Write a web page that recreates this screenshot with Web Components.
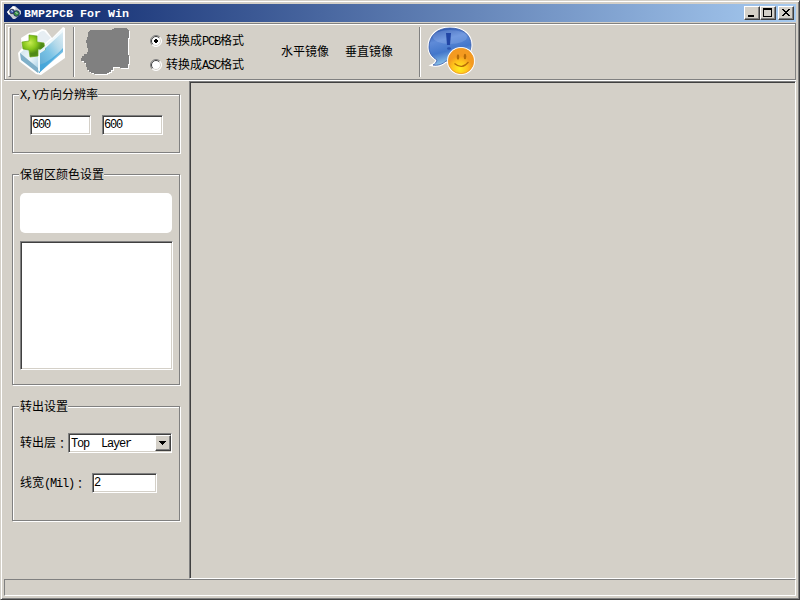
<!DOCTYPE html>
<html lang="zh-CN"><head><meta charset="utf-8"><title>BMP2PCB For Win</title>
<style>
html,body{margin:0;width:800px;height:600px;overflow:hidden}
body{font:12px/16px "Liberation Mono","Noto Sans CJK SC",monospace;color:#000;background:#d4d0c8}
</style></head><body>
<app-window></app-window>
<script>
function define(name, html) {
  customElements.define(name, class extends HTMLElement {
    constructor() {
      super();
      const t = document.createElement('template');
      t.innerHTML = html;
      this.attachShadow({mode: 'open'}).append(t.content.cloneNode(true));
    }
  });
}
// Half-width Latin run: each character takes 6px
define('half-text', `<style>:host{display:inline;letter-spacing:-1.2px;white-space:pre}</style><slot></slot>`);
define('text-field', `<style>
:host{display:block;box-sizing:border-box;width:61px;height:20px;background:#fff;border:1px solid;border-color:#808080 #fff #fff #808080;box-shadow:inset 1px 1px #404040,inset -1px -1px #d4d0c8;padding:1px 0 0 1px;line-height:16px}
</style><half-text><slot></slot></half-text>`);
define('group-box', `<style>
:host{display:block;box-sizing:border-box;width:168px;border:1px solid #808080;box-shadow:1px 1px #fff,inset 1px 1px #fff}
.cap{display:block;width:max-content;height:15px;margin:-7px 0 0 6px;padding-left:1px;background:#d4d0c8;white-space:nowrap}
</style><span class="cap"><slot name="caption"></slot></span><slot></slot>`);
define('radio-item', `<style>
:host{display:flex;align-items:center;height:16px;gap:4px;white-space:nowrap}
svg{display:block}span{padding-top:2px}.dot{display:none}:host([checked]) .dot{display:inline}
</style><svg width="12" height="12"><circle cx="6" cy="6" r="5.2" fill="#fff"/><path d="M2.1 9.9A5.5 5.5 0 0 1 9.9 2.1" fill="none" stroke="#808080"/><path d="M2.8 9.2A4.5 4.5 0 0 1 9.2 2.8" fill="none" stroke="#404040"/><path d="M2.8 9.2A4.5 4.5 0 0 0 9.2 2.8" fill="none" stroke="#d4d0c8"/><path d="M2.1 9.9A5.5 5.5 0 0 0 9.9 2.1" fill="none" stroke="#fff"/><path class="dot" d="M5 4h2v1h1v2h-1v1h-2v-1h-1v-2h1z" shape-rendering="crispEdges"/></svg><span><slot></slot></span>`);
define('win-button', `<style>
:host{display:block;box-sizing:border-box;width:16px;height:14px;background:#d4d0c8;border:1px solid;border-color:#fff #404040 #404040 #fff;box-shadow:inset -1px -1px #808080}
</style><slot></slot>`);
define('combo-box', `<style>
:host{display:flex;box-sizing:border-box;width:104px;height:20px;background:#fff;border:1px solid;border-color:#808080 #fff #fff #808080;box-shadow:inset 1px 1px #404040,inset -1px -1px #d4d0c8;padding:1px 0 1px 2px}
span{flex:1;line-height:18px}win-button{width:16px;height:16px}svg{display:block}
</style><span><half-text><slot></slot></half-text></span><win-button><svg width="14" height="14" shape-rendering="crispEdges"><path d="M3 5h7v1h-1v1h-1v1h-1v1h-1v-1h-1v-1h-1v-1h-1z"/></svg></win-button>`);
define('title-bar', `<style>
:host{display:flex;box-sizing:border-box;height:18px;align-items:center;padding:0 2px;color:#fff;background:linear-gradient(90deg,#0a246a,#a6caf0)}
b{flex:1;font-size:11.67px;line-height:18px;margin-left:2px;padding-top:1px;white-space:pre}
win-button:last-child{margin-left:2px}svg{display:block}
</style><svg width="16" height="16"><path d="M1 7L7 1h2l6 5v3l-6 5H7z" fill="#c8ccd4"/><path d="M1 7l6-6 3 2-7 7z" fill="#fff"/><circle cx="6" cy="6.5" r="2.3" fill="#3a55b4" stroke="#333a50"/><circle cx="10.5" cy="8.5" r="2.8" fill="#3c9440" stroke="#182b60"/><path d="M5 5.5l2 1M9.5 7.5l2 1" stroke="#c6dae0"/></svg><b>BMP2PCB For Win</b>
<win-button><svg width="14" height="12" shape-rendering="crispEdges"><path d="M3 8h6v2H3z"/></svg></win-button>
<win-button><svg width="14" height="12" shape-rendering="crispEdges"><path d="M2 1h9v9H2zM3 3v6h7V3z" fill-rule="evenodd"/></svg></win-button>
<win-button><svg width="14" height="12" shape-rendering="crispEdges"><path d="M3 2h2v1h1v1h2V3h1V2h2v1h-1v1H9v1H8v1h1v1h1v1h1v1H9V8H8V7H6v1H5v1H3V8h1V7h1V6h1V5H5V4H4V3H3z"/></svg></win-button>`);
define('open-icon', `<style>:host{display:block;width:48px;height:50px}svg{display:block}</style>
<svg width="48" height="50" viewBox="0 0 48 50"><defs><linearGradient id="a" x1="1" y1="0" x2=".2" y2="1"><stop stop-color="#e2eff5"/><stop offset=".35" stop-color="#b4d9ea"/><stop offset=".6" stop-color="#7cc4e6"/><stop offset="1" stop-color="#5da9d3"/></linearGradient><linearGradient id="b" x2="1" y2="1"><stop stop-color="#b5d2e0"/><stop offset=".5" stop-color="#eff8fc"/><stop offset="1" stop-color="#6badd0"/></linearGradient><radialGradient id="g" cx=".35" cy=".35"><stop stop-color="#c6ec50"/><stop offset=".6" stop-color="#85c51a"/><stop offset="1" stop-color="#4f8a18"/></radialGradient></defs>
<path d="M0 27L4 22 3 12l8-5 7-1 6-3 4 1 6 8L45 1l2 1v30L23 49l-5-1L1 35z" fill="#fff"/>
<path d="M2 27l9-7L22 6l4-1 6 7-10 9v26l-3-1L3 33z" fill="url(#b)"/><path d="M23 6q2-2 4 0l6 6-11 9-7-7z" fill="#e7eef3"/>
<path d="M2 27l18 15v5L3 34z" fill="#7fafc8"/><path d="M21 25L45 4v20L21 47z" fill="url(#a)"/><path d="M21 39c8-2 17-9 24-17v4L21 47z" fill="#3ba3da" opacity=".7"/><path d="M20 26L45 3v3L22 27v19l-2-2z" fill="#f0f9fc"/>
<path d="M11 9l8 1v6l7 1 1 7-7-1v7l-8 1-1-7-6-1-1-7 7-1z" fill="url(#g)" stroke="#6aa51b" stroke-width=".7"/><path d="M21 25l6-5v4l-6 4z" fill="#eaf4f8"/></svg>`);
define('convert-icon', `<style>:host{display:block;width:50px;height:50px}svg{display:block}</style>
<svg width="50" height="50" shape-rendering="crispEdges"><defs><path id="s" d="M9 3h22V2h2V1h13v1h1v1h1v8h-1v17h1v9h-1v4h-8v-1h-7v3h-2v2h-2v1h-2v1H13v-1h-3v-1H8v-2H6v-3H5v-4H3v-2H0v-3h1v-2h2v-2h3v-2h1v-4H6v-5H5v-3h1v-3h1v-5h1z"/></defs><use href="#s" x="1" y="1" fill="#fff"/><use href="#s" fill="#808080"/></svg>`);
define('about-icon', `<style>:host{display:block;width:50px;height:50px}svg{display:block}</style>
<svg width="50" height="50"><defs><linearGradient id="b" x1=".3" y1="0" x2=".6" y2="1"><stop stop-color="#2c56ae"/><stop offset=".3" stop-color="#5f8bd8"/><stop offset=".6" stop-color="#4377cb"/><stop offset="1" stop-color="#a5dcf2"/></linearGradient><radialGradient id="y" cx=".45" cy=".8"><stop stop-color="#ffed22"/><stop offset=".6" stop-color="#ffc21c"/><stop offset="1" stop-color="#f49a20"/></radialGradient></defs>
<path d="M23 1C10 1 2 9 2 20c0 6 3 10 8 13-1 3-2 4-4 5 5 1 10-1 13-4 14 2 25-5 25-16C44 8 36 1 23 1z" fill="#fff" stroke="#fff" stroke-width="3"/>
<path d="M23 1C10 1 2 9 2 20c0 6 3 10 8 13-1 3-2 4-4 5 5 1 10-1 13-4 14 2 25-5 25-16C44 8 36 1 23 1z" fill="url(#b)" stroke="#3559a8" stroke-width=".8"/>
<ellipse cx="23" cy="10" rx="17" ry="7" fill="#c2d9ff" opacity=".2"/><path d="M19 6h5l-1 12h-3z" fill="#2145a5"/><ellipse cx="22" cy="21.5" rx="2" ry="1.3" fill="#2c54ae"/>
<circle cx="34" cy="34" r="14" fill="#fff"/><circle cx="34" cy="34" r="12.7" fill="url(#y)" stroke="#ed9420" stroke-width=".8"/><ellipse cx="31" cy="30" rx="1.3" ry="2.7" fill="#b76c08"/><ellipse cx="38" cy="29.5" rx="1.3" ry="2.7" fill="#b76c08"/><path d="M27.500 36.500q7.500 6.500 14-1.500" fill="none" stroke="#b76c08" stroke-width="1.2"/></svg>`);
define('tool-bar', `<style>
:host{display:flex;box-sizing:border-box;height:57px;border:1px solid #808080;box-shadow:inset 1px 1px #fff,0 1px #fff;padding-left:3px;align-items:flex-start}
:host>*{flex:none}.grip{width:1px;height:48px;margin-top:3px;border:1px solid;border-color:#fff #808080 #808080 #fff}
.sep{width:1px;height:50px;margin-top:3px;background:#808080;border-right:1px solid #fff}
open-icon{margin:2px 7px 0 7px}convert-icon{margin:3px 0 0 6px}
.radios{display:flex;flex-direction:column;gap:8px;margin:9px 0 0 19px;width:131px}
.label{width:48px;margin:21px 16px 0 0;white-space:nowrap}about-icon{margin:3px 0 0 6px}
.last{margin-right:10px}.label+.last{margin-right:26px}
</style><div class="grip"></div><open-icon></open-icon><div class="sep"></div><convert-icon></convert-icon>
<div class="radios"><radio-item checked>转换成<half-text>PCB</half-text>格式</radio-item><radio-item>转换成<half-text>ASC</half-text>格式</radio-item></div>
<span class="label">水平镜像</span><span class="label last">垂直镜像</span><div class="sep"></div><about-icon></about-icon>`);
define('side-panel', `<style>
:host{display:flex;flex-direction:column;box-sizing:border-box;width:185px;padding:13px 0 0 8px;gap:21px}
.res{height:59px}.color{height:211px}.out{height:115px}
.fields{display:flex;gap:11px;padding:12px 0 0 17px}
.swatch{width:152px;height:40px;border-radius:5px;background:#fff;margin:10px 0 8px 7px}
.list{box-sizing:border-box;width:153px;height:129px;margin-left:7px;background:#fff;border:1px solid;border-color:#808080 #fff #fff #808080;box-shadow:inset 1px 1px #404040,inset -1px -1px #d4d0c8}
.row{display:flex;align-items:center;height:20px;margin:18px 0 0 7px;white-space:nowrap}
.row>span{width:48px;padding-top:2px}.row+.row{margin-top:20px}.row+.row>span{width:72px}text-field.w{width:65px}
i{font:12px/16px "Noto Sans CJK TC",sans-serif;display:inline-block;height:16px;vertical-align:top}
</style>
<group-box class="res"><span slot="caption"><half-text>X,Y</half-text>方向分辨率</span><div class="fields"><text-field>600</text-field><text-field>600</text-field></div></group-box>
<group-box class="color"><span slot="caption">保留区颜色设置</span><div class="swatch"></div><div class="list"></div></group-box>
<group-box class="out"><span slot="caption">转出设置</span><div class="row"><span>转出层<i lang="zh-TW">：</i></span><combo-box>Top  Layer</combo-box></div><div class="row"><span>线宽<half-text>(Mil)</half-text><i lang="zh-TW">：</i></span><text-field class="w">2</text-field></div></group-box>`);
define('app-window', `<style>
:host{display:flex;flex-direction:column;box-sizing:border-box;width:800px;height:600px;background:#d4d0c8;border:1px solid;border-color:#d4d0c8 #404040 #404040 #d4d0c8;box-shadow:inset 1px 1px #fff,inset -1px -1px #808080;padding:3px}
tool-bar{margin-top:1px;flex:none}title-bar{flex:none}
main{display:flex;height:498px;margin-top:1px}
.canvas{flex:1;box-sizing:border-box;border:1px solid;border-color:#808080 #fff #fff #808080;box-shadow:inset 1px 1px #404040}
footer{box-sizing:border-box;height:17px;border:1px solid;border-color:#808080 #fff #fff #808080}
</style><title-bar></title-bar><tool-bar></tool-bar><main><side-panel></side-panel><div class="canvas"></div></main><footer></footer>`);
</script></body></html>
